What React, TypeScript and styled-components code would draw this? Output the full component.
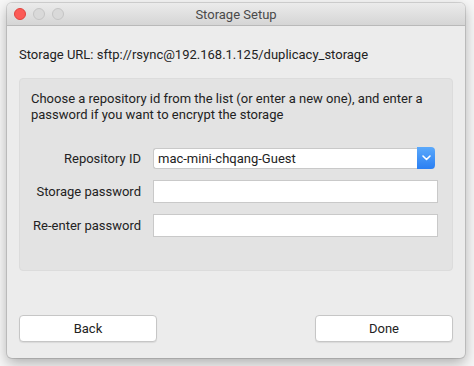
import styled, { createGlobalStyle } from "styled-components";

const GlobalStyle = createGlobalStyle`
    html, body {
        margin: 0;
        padding: 0;
        background: #f7f7f7;
        font-family: Roboto, "Noto Sans", "Liberation Sans", sans-serif;
    }
`;

const StorageSetup = () => {
    return (
        <Page>
            <GlobalStyle />
            <Window>
                <TitleBar>
                    <Lights>
                        <Light $color="#fc5b57" $ring="#e0443e" />
                        <Light $color="#d9d9d9" $ring="#c4c4c4" />
                        <Light $color="#d9d9d9" $ring="#c4c4c4" />
                    </Lights>
                    <Title>Storage Setup</Title>
                </TitleBar>
                <Body>
                    <UrlLine>Storage URL: sftp://rsync@192.168.1.125/duplicacy_storage</UrlLine>
                    <Group>
                        <Hint>
                            Choose a repository id from the list (or enter a new one), and enter a
                            <br />
                            password if you want to encrypt the storage
                        </Hint>
                        <Form>
                            <Label>Repository ID</Label>
                            <Combo>
                                <ComboText>mac-mini-chqang-Guest</ComboText>
                                <ComboButton>
                                    <svg width="9" height="6" viewBox="0 0 9 6">
                                        <path d="M1 1 L4.5 4.5 L8 1" fill="none" stroke="#fff" strokeWidth="1.6" strokeLinecap="round" strokeLinejoin="round" />
                                    </svg>
                                </ComboButton>
                            </Combo>
                            <Label>Storage password</Label>
                            <Field type="password" />
                            <Label>Re-enter password</Label>
                            <Field type="password" />
                        </Form>
                    </Group>
                    <Footer>
                        <Button>Back</Button>
                        <Button>Done</Button>
                    </Footer>
                </Body>
            </Window>
        </Page>
    );
}

export default StorageSetup;

// styled-component

const Page = styled.div`
    width: 474px;
    height: 366px;
    padding: 3px 9px 0 7px;
    box-sizing: border-box;
`;

const Window = styled.div`
    width: 458px;
    height: 355px;
    display: flex;
    flex-direction: column;
    background: #ececec;
    border-radius: 5px;
    box-shadow: 0 0 0 1px rgba(0, 0, 0, 0.12), 0 5px 14px rgba(0, 0, 0, 0.3);
    overflow: hidden;
`;

const TitleBar = styled.div`
    height: 22px;
    flex-shrink: 0;
    display: flex;
    align-items: center;
    justify-content: center;
    position: relative;
    background: linear-gradient(#ebebeb, #d5d5d5);
    border-bottom: 1px solid #b9b9b9;
`;

const Lights = styled.div`
    position: absolute;
    left: 7px;
    top: 5px;
    display: flex;
    gap: 7px;
`;

const Light = styled.span<{ $color: string; $ring: string }>`
    width: 12px;
    height: 12px;
    box-sizing: border-box;
    border-radius: 50%;
    background: ${props => props.$color};
    border: 1px solid ${props => props.$ring};
`;

const Title = styled.div`
    font-size: 13px;
    color: #4a4a4a;
`;

const Body = styled.div`
    flex: 1;
    display: flex;
    flex-direction: column;
    padding: 21px 12px 16px 12px;
`;

const UrlLine = styled.div`
    font-size: 13px;
    line-height: 16px;
    color: #222;
    white-space: nowrap;
`;

const Group = styled.div`
    margin-top: 15px;
    height: 193px;
    box-sizing: border-box;
    padding: 12px 14px 0 11px;
    background: #e3e3e3;
    border: 1px solid #dcdcdc;
    border-radius: 4px;
`;

const Hint = styled.div`
    font-size: 13px;
    line-height: 16px;
    color: #222;
    white-space: nowrap;
`;

const Form = styled.div`
    margin-top: 24px;
    display: grid;
    grid-template-columns: 110px 1fr;
    grid-template-rows: 22px 23px 23px;
    column-gap: 12px;
    row-gap: 11px;
    align-items: center;
`;

const Label = styled.div`
    font-size: 13px;
    color: #222;
    text-align: right;
    white-space: nowrap;
`;

const Combo = styled.div`
    height: 21px;
    margin-right: 3px;
    display: flex;
    background: #fff;
    border: 1px solid #c9c9c9;
    border-right: none;
    border-radius: 3px;
    box-sizing: border-box;
`;

const ComboText = styled.div`
    flex: 1;
    font-size: 13px;
    line-height: 19px;
    padding-left: 4px;
    color: #222;
`;

const ComboButton = styled.div`
    width: 18px;
    margin: -2px 0 -1px 0;
    display: flex;
    align-items: center;
    justify-content: center;
    background: linear-gradient(#5ba9fb, #2a7ff3);
    border-radius: 0 4px 4px 0;
`;

const Field = styled.input`
    height: 23px;
    box-sizing: border-box;
    margin: 0;
    background: #fff;
    border: 1px solid #c9c9c9;
    outline: none;
`;

const Footer = styled.div`
    margin-top: auto;
    display: flex;
    justify-content: space-between;
`;

const Button = styled.button`
    width: 138px;
    height: 27px;
    font-family: inherit;
    font-size: 13px;
    color: #222;
    background: #fff;
    border: 1px solid #c6c6c6;
    border-radius: 4px;
    box-shadow: 0 1px 1px rgba(0, 0, 0, 0.08);
`;
